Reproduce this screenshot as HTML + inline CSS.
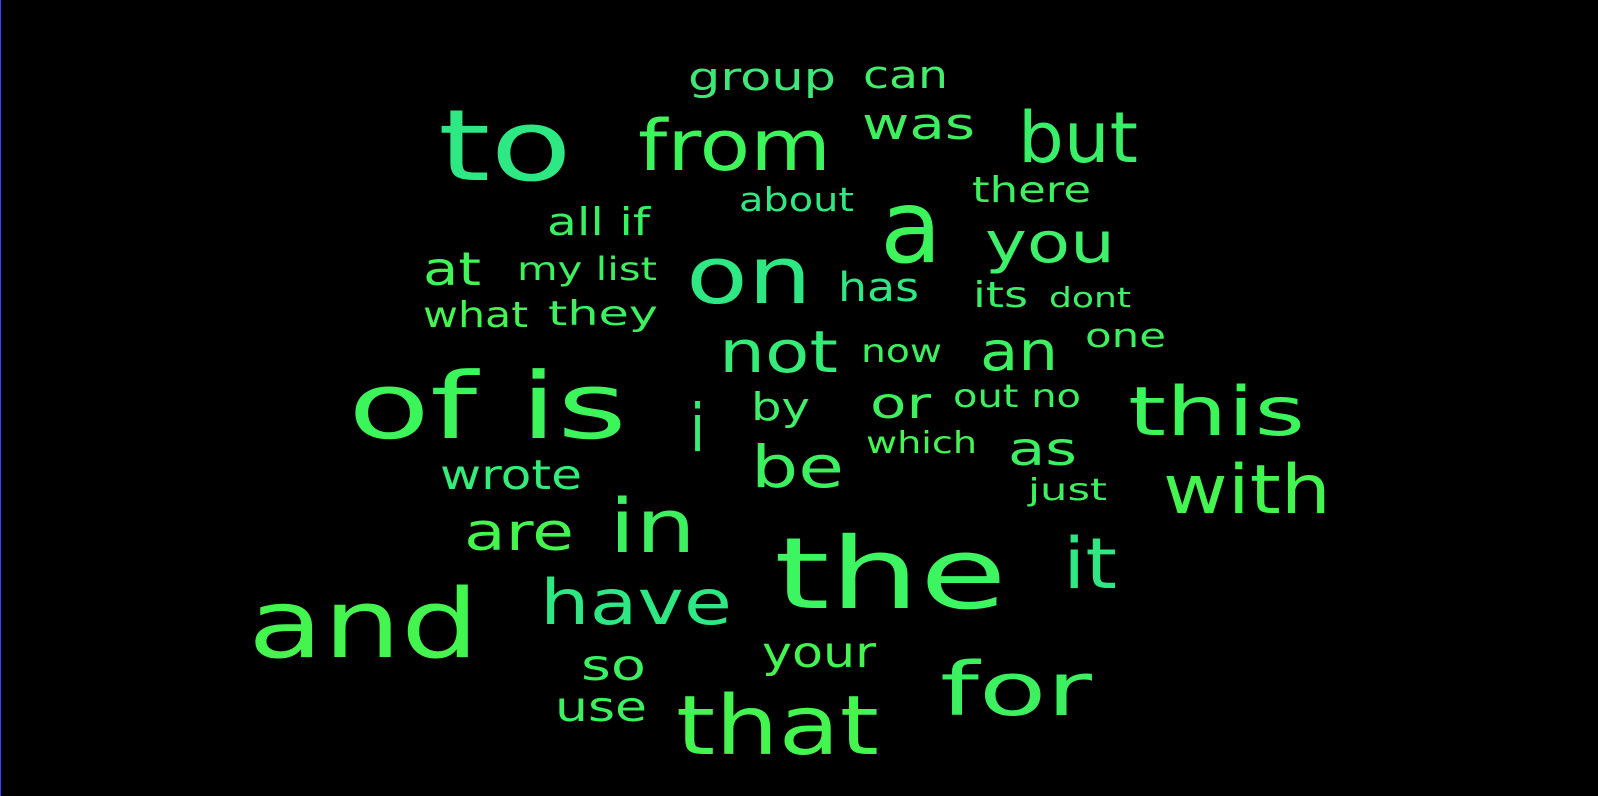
<!DOCTYPE html>
<html><head><meta charset="utf-8"><style>
html,body{margin:0;padding:0;background:#000;width:1598px;height:796px;overflow:hidden}
svg{display:block}
text{font-family:"DejaVu Sans","Liberation Sans",sans-serif}
</style></head><body>
<svg width="1598" height="796" viewBox="0 0 1598 796">
<rect width="1598" height="796" fill="#000"/>
<rect x="0" y="0" width="1" height="796" fill="#3344ff"/>
<g>
<text x="688" y="90" font-size="38" textLength="148" lengthAdjust="spacingAndGlyphs" fill="#3ee878">group</text>
<text x="863" y="88" font-size="38" textLength="85" lengthAdjust="spacingAndGlyphs" fill="#3ef06a">can</text>
<text x="438" y="180" font-size="99" textLength="134" lengthAdjust="spacingAndGlyphs" fill="#2ee884">to</text>
<text x="638" y="170" font-size="70" textLength="193" lengthAdjust="spacingAndGlyphs" fill="#3cf55a">from</text>
<text x="862" y="139" font-size="44" textLength="113" lengthAdjust="spacingAndGlyphs" fill="#3cf060">was</text>
<text x="1018" y="162" font-size="70" textLength="120" lengthAdjust="spacingAndGlyphs" fill="#38f068">but</text>
<text x="972" y="202" font-size="36" textLength="119" lengthAdjust="spacingAndGlyphs" fill="#3cf060">there</text>
<text x="739" y="211" font-size="33" textLength="115" lengthAdjust="spacingAndGlyphs" fill="#30e882">about</text>
<text x="547" y="235" font-size="38" textLength="103" lengthAdjust="spacingAndGlyphs" fill="#38f060">all if</text>
<text x="880" y="262" font-size="102" textLength="62" lengthAdjust="spacingAndGlyphs" fill="#3cf55a">a</text>
<text x="985" y="262" font-size="56" textLength="130" lengthAdjust="spacingAndGlyphs" fill="#3ef06a">you</text>
<text x="423" y="285" font-size="46" textLength="58" lengthAdjust="spacingAndGlyphs" fill="#40f558">at</text>
<text x="517" y="280" font-size="32" textLength="140" lengthAdjust="spacingAndGlyphs" fill="#3cf060">my list</text>
<text x="686" y="303" font-size="79" textLength="126" lengthAdjust="spacingAndGlyphs" fill="#2ee884">on</text>
<text x="838" y="301" font-size="40" textLength="81" lengthAdjust="spacingAndGlyphs" fill="#2ee884">has</text>
<text x="973" y="307" font-size="36" textLength="55" lengthAdjust="spacingAndGlyphs" fill="#38f068">its</text>
<text x="1049" y="307" font-size="28" textLength="82" lengthAdjust="spacingAndGlyphs" fill="#3ef06a">dont</text>
<text x="423" y="327" font-size="36" textLength="105" lengthAdjust="spacingAndGlyphs" fill="#44f550">what</text>
<text x="548" y="325" font-size="34" textLength="110" lengthAdjust="spacingAndGlyphs" fill="#3cf060">they</text>
<text x="719" y="372" font-size="58" textLength="119" lengthAdjust="spacingAndGlyphs" fill="#34ec78">not</text>
<text x="861" y="362" font-size="32" textLength="81" lengthAdjust="spacingAndGlyphs" fill="#3cf060">now</text>
<text x="980" y="370" font-size="54" textLength="78" lengthAdjust="spacingAndGlyphs" fill="#3cf060">an</text>
<text x="1085" y="347" font-size="33" textLength="81" lengthAdjust="spacingAndGlyphs" fill="#3cf060">one</text>
<text x="348" y="438" font-size="92" textLength="279" lengthAdjust="spacingAndGlyphs" fill="#3cf55a">of is</text>
<text x="690" y="451" font-size="66" textLength="15" lengthAdjust="spacingAndGlyphs" fill="#34ec78">i</text>
<text x="751" y="420" font-size="38" textLength="59" lengthAdjust="spacingAndGlyphs" fill="#3ef06a">by</text>
<text x="870" y="418" font-size="43" textLength="61" lengthAdjust="spacingAndGlyphs" fill="#3cf060">or</text>
<text x="953" y="407" font-size="32" textLength="128" lengthAdjust="spacingAndGlyphs" fill="#3cf060">out no</text>
<text x="1128" y="435" font-size="68" textLength="177" lengthAdjust="spacingAndGlyphs" fill="#3cf55a">this</text>
<text x="866" y="453" font-size="30" textLength="111" lengthAdjust="spacingAndGlyphs" fill="#44f550">which</text>
<text x="1008" y="465" font-size="46" textLength="69" lengthAdjust="spacingAndGlyphs" fill="#3cf060">as</text>
<text x="751" y="487" font-size="58" textLength="93" lengthAdjust="spacingAndGlyphs" fill="#3cf060">be</text>
<text x="440" y="489" font-size="41" textLength="142" lengthAdjust="spacingAndGlyphs" fill="#34ec78">wrote</text>
<text x="1028" y="500" font-size="30" textLength="79" lengthAdjust="spacingAndGlyphs" fill="#3cf060">just</text>
<text x="1163" y="513" font-size="68" textLength="168" lengthAdjust="spacingAndGlyphs" fill="#44f550">with</text>
<text x="464" y="550" font-size="52" textLength="110" lengthAdjust="spacingAndGlyphs" fill="#44f550">are</text>
<text x="609" y="552" font-size="74" textLength="87" lengthAdjust="spacingAndGlyphs" fill="#3cf060">in</text>
<text x="774" y="608" font-size="99" textLength="233" lengthAdjust="spacingAndGlyphs" fill="#3cf560">the</text>
<text x="1063" y="588" font-size="70" textLength="54" lengthAdjust="spacingAndGlyphs" fill="#2ee884">it</text>
<text x="248" y="657" font-size="95" textLength="231" lengthAdjust="spacingAndGlyphs" fill="#44f550">and</text>
<text x="540" y="624" font-size="62" textLength="192" lengthAdjust="spacingAndGlyphs" fill="#2ee884">have</text>
<text x="581" y="680" font-size="43" textLength="65" lengthAdjust="spacingAndGlyphs" fill="#3cf060">so</text>
<text x="762" y="667" font-size="43" textLength="114" lengthAdjust="spacingAndGlyphs" fill="#44f550">your</text>
<text x="940" y="715" font-size="74" textLength="152" lengthAdjust="spacingAndGlyphs" fill="#3cf060">for</text>
<text x="555" y="721" font-size="41" textLength="92" lengthAdjust="spacingAndGlyphs" fill="#3cf060">use</text>
<text x="676" y="754" font-size="82" textLength="203" lengthAdjust="spacingAndGlyphs" fill="#44f550">that</text>
</g>
</svg>
</body></html>
